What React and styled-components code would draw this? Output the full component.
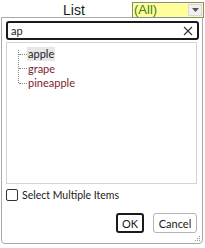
import React from "react";
import styled, { createGlobalStyle } from "styled-components";

const Global = createGlobalStyle`
  html, body { margin: 0; padding: 0; background: #fff; }
  body { font-family: Lato, "Noto Sans", sans-serif; color: #1a1a1a; }
`;

const Page = styled.div`
  width: 205px;
  height: 248px;
  display: flex;
  flex-direction: column;
  box-sizing: border-box;
`;

const Header = styled.div`
  display: flex;
  align-items: center;
  height: 18px;
  padding-top: 1px;
  box-sizing: border-box;
`;

const Label = styled.div`
  width: 132px;
  flex: none;
  padding-left: 63px;
  box-sizing: border-box;
  font-family: "Liberation Sans", sans-serif;
  font-size: 14px;
  color: #1a1a1a;
  line-height: 16px;
`;

const Select = styled.div`
  width: 72px;
  height: 16px;
  display: flex;
  align-items: stretch;
  background: #ffff99;
  border: 1px solid #8a8a8a;
  box-sizing: border-box;
  position: relative;
  z-index: 1;
`;

const SelectText = styled.div`
  flex: 1;
  font-family: "Liberation Sans", sans-serif;
  font-size: 13px;
  line-height: 14px;
  color: #3f7a22;
  padding-left: 1px;
`;

const ArrowBtn = styled.div`
  width: 14px;
  margin: 1px;
  background: #f0f0f0;
  border: 1px solid #d8d8d8;
  box-sizing: border-box;
  display: flex;
  align-items: center;
  justify-content: center;
`;

const Panel = styled.div`
  margin-left: 1px;
  margin-top: -1px;
  width: 202px;
  height: 227px;
  border: 1px solid #a9a9a9;
  border-radius: 0 0 4px 4px;
  box-sizing: border-box;
  padding: 3px 2px 0 4px;
  display: flex;
  flex-direction: column;
  position: relative;
`;

const Search = styled.div`
  height: 19px;
  margin-right: 1px;
  border: 2px solid #1a1a1a;
  border-radius: 3px;
  box-sizing: border-box;
  display: flex;
  align-items: center;
  padding: 0 4px 0 3px;
  font-size: 11px;
`;

const SearchText = styled.div`
  flex: 1;
`;

const ListBox = styled.div`
  margin-top: 2px;
  margin-right: 3px;
  height: 142px;
  border: 1px solid #d4d4d4;
  box-sizing: border-box;
  position: relative;
  padding: 4px 0 0 10px;
`;

const TreeLine = styled.div`
  position: absolute;
  left: 11px;
  top: 7px;
  height: 33px;
  border-left: 1px dotted #8a8a8a;
`;

const Row = styled.div`
  display: flex;
  align-items: center;
  height: 14.5px;
`;

const Connector = styled.div`
  width: 8px;
  margin-left: 2px;
  border-top: 1px dotted #8a8a8a;
`;

const Item = styled.div`
  font-size: 11px;
  line-height: 14px;
  padding: 0 1px;
  color: ${(p) => (p.$match ? "#7a1d2e" : "#1a1a1a")};
  background: ${(p) => (p.$active ? "#e6e6e6" : "transparent")};
`;

const CheckRow = styled.div`
  display: flex;
  align-items: center;
  gap: 4px;
  margin-top: 4px;
  height: 13px;
  font-size: 10.5px;
`;

const Box = styled.div`
  width: 12px;
  height: 12px;
  border: 1px solid #333;
  border-radius: 2px;
  box-sizing: border-box;
`;

const Buttons = styled.div`
  display: flex;
  justify-content: flex-end;
  gap: 9px;
  margin-top: 12px;
  padding-right: 3px;
`;

const Button = styled.div`
  height: 20px;
  box-sizing: border-box;
  border: ${(p) => (p.$primary ? "2px solid #1a1a1a" : "1px solid #b4b4b4")};
  border-radius: 3px;
  font-size: 11px;
  display: flex;
  align-items: center;
  justify-content: center;
  width: ${(p) => p.$w}px;
`;

const Grip = styled.svg`
  position: absolute;
  right: 1px;
  bottom: 1px;
`;

export default function App() {
  return (
    <Page>
      <Global />
      <Header>
        <Label>List</Label>
        <Select>
          <SelectText>(All)</SelectText>
          <ArrowBtn>
            <svg width="7" height="4" viewBox="0 0 7 4">
              <path d="M0 0h7L3.5 4z" fill="#555" />
            </svg>
          </ArrowBtn>
        </Select>
      </Header>
      <Panel>
        <Search>
          <SearchText>ap</SearchText>
          <svg width="10" height="10" viewBox="0 0 10 10">
            <path d="M1 1L9 9M9 1L1 9" stroke="#333" strokeWidth="1.1" />
          </svg>
        </Search>
        <ListBox>
          <TreeLine />
          <Row>
            <Connector />
            <Item $active>apple</Item>
          </Row>
          <Row>
            <Connector />
            <Item $match>grape</Item>
          </Row>
          <Row>
            <Connector />
            <Item $match>pineapple</Item>
          </Row>
        </ListBox>
        <CheckRow>
          <Box />
          Select Multiple Items
        </CheckRow>
        <Buttons>
          <Button $primary $w={28}>OK</Button>
          <Button $w={44}>Cancel</Button>
        </Buttons>
        <Grip width="6" height="6" viewBox="0 0 6 6">
          <rect x="4" y="0" width="1" height="1" fill="#999" />
          <rect x="2" y="2" width="1" height="1" fill="#999" />
          <rect x="4" y="2" width="1" height="1" fill="#999" />
          <rect x="0" y="4" width="1" height="1" fill="#999" />
          <rect x="2" y="4" width="1" height="1" fill="#999" />
          <rect x="4" y="4" width="1" height="1" fill="#999" />
        </Grip>
      </Panel>
    </Page>
  );
}
